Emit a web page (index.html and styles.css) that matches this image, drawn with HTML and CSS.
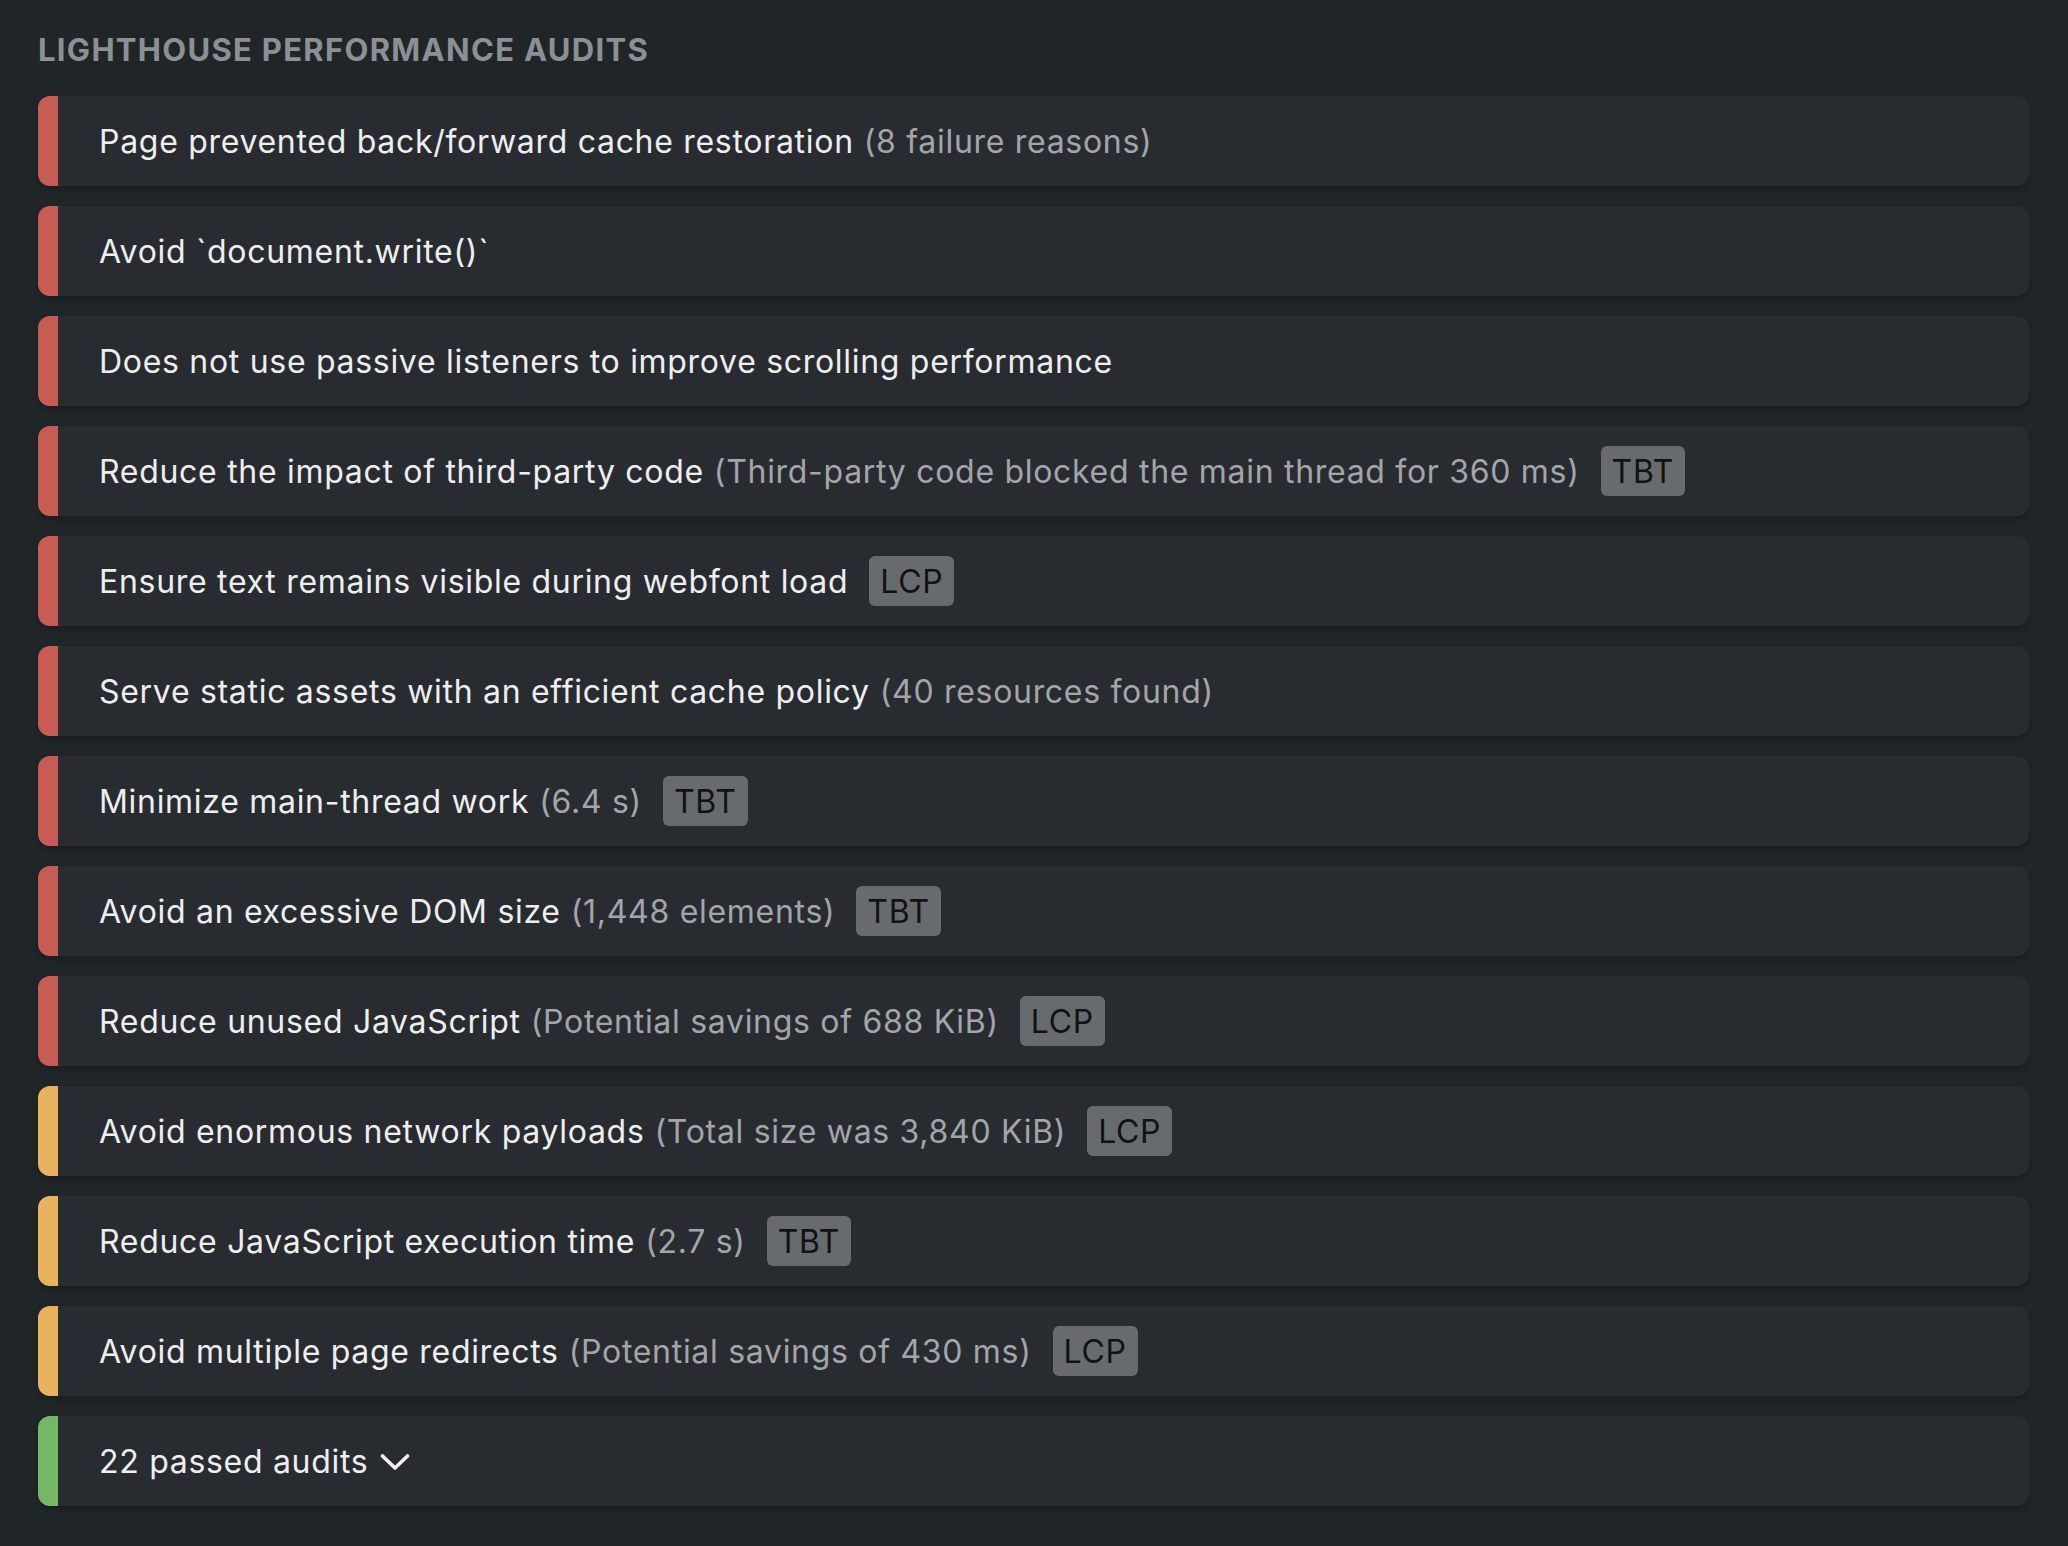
FILE: index.html
```html
<!DOCTYPE html>
<html lang="en">
<head>
<meta charset="utf-8">
<title>Lighthouse Performance Audits</title>
<link rel="stylesheet" href="styles.css">
</head>
<body>
<section class="audits">
  <h2 class="audits-title">LIGHTHOUSE PERFORMANCE AUDITS</h2>
  <ul class="audit-list">
    <li class="audit audit-fail"><span class="audit-bar"></span><div class="audit-body"><span class="audit-name">Page prevented back/forward cache restoration</span><span class="audit-detail">(8 failure reasons)</span></div></li>
    <li class="audit audit-fail"><span class="audit-bar"></span><div class="audit-body"><span class="audit-name">Avoid `document.write()`</span></div></li>
    <li class="audit audit-fail"><span class="audit-bar"></span><div class="audit-body"><span class="audit-name">Does not use passive listeners to improve scrolling performance</span></div></li>
    <li class="audit audit-fail"><span class="audit-bar"></span><div class="audit-body"><span class="audit-name">Reduce the impact of third-party code</span><span class="audit-detail">(Third-party code blocked the main thread for 360 ms)</span><span class="badge">TBT</span></div></li>
    <li class="audit audit-fail"><span class="audit-bar"></span><div class="audit-body"><span class="audit-name">Ensure text remains visible during webfont load</span><span class="badge">LCP</span></div></li>
    <li class="audit audit-fail"><span class="audit-bar"></span><div class="audit-body"><span class="audit-name">Serve static assets with an efficient cache policy</span><span class="audit-detail">(40 resources found)</span></div></li>
    <li class="audit audit-fail"><span class="audit-bar"></span><div class="audit-body"><span class="audit-name">Minimize main-thread work</span><span class="audit-detail">(6.4 s)</span><span class="badge">TBT</span></div></li>
    <li class="audit audit-fail"><span class="audit-bar"></span><div class="audit-body"><span class="audit-name">Avoid an excessive DOM size</span><span class="audit-detail">(1,448 elements)</span><span class="badge">TBT</span></div></li>
    <li class="audit audit-fail"><span class="audit-bar"></span><div class="audit-body"><span class="audit-name">Reduce unused JavaScript</span><span class="audit-detail">(Potential savings of 688 KiB)</span><span class="badge">LCP</span></div></li>
    <li class="audit audit-warn"><span class="audit-bar"></span><div class="audit-body"><span class="audit-name">Avoid enormous network payloads</span><span class="audit-detail">(Total size was 3,840 KiB)</span><span class="badge">LCP</span></div></li>
    <li class="audit audit-warn"><span class="audit-bar"></span><div class="audit-body"><span class="audit-name">Reduce JavaScript execution time</span><span class="audit-detail">(2.7 s)</span><span class="badge">TBT</span></div></li>
    <li class="audit audit-warn"><span class="audit-bar"></span><div class="audit-body"><span class="audit-name">Avoid multiple page redirects</span><span class="audit-detail">(Potential savings of 430 ms)</span><span class="badge">LCP</span></div></li>
    <li class="audit audit-pass"><span class="audit-bar"></span><div class="audit-body"><span class="audit-name">22 passed audits</span><svg class="chevron" width="30" height="18" viewBox="0 0 30 18" aria-hidden="true"><polyline points="2.5,3 15,15 27.5,3" fill="none" stroke="#f0f0f0" stroke-width="3.6" stroke-linecap="round" stroke-linejoin="round"/></svg></div></li>
  </ul>
</section>
</body>
</html>
```
FILE: styles.css
```css
html, body {
  margin: 0;
  padding: 0;
  background: #202528;
}
body {
  font-family: Inter, "Open Sans", sans-serif;
  color: #ececec;
}
.audits {
  padding: 30px 39px 40px 38px;
}
.audits-title {
  margin: 0 0 26px 0;
  font-size: 31px;
  line-height: 40px;
  font-weight: 700;
  color: #8c9095;
  letter-spacing: 1.3px;
}
.audit-list {
  list-style: none;
  margin: 0;
  padding: 0;
  display: flex;
  flex-direction: column;
  gap: 20px;
}
.audit {
  display: flex;
  align-items: stretch;
  height: 90px;
  background: #282c31;
  border-radius: 12px;
  overflow: hidden;
  box-shadow: 0 3px 5px rgba(0, 0, 0, 0.22);
}
.audit-bar {
  width: 20px;
  flex: none;
}
.audit-fail .audit-bar { background: #c95b55; }
.audit-warn .audit-bar { background: #e8b25f; }
.audit-pass .audit-bar { background: #76b766; }
.audit-body {
  display: flex;
  align-items: center;
  padding-left: 41px;
  font-size: 32px;
  letter-spacing: 0.7px;
  white-space: nowrap;
}
.audit-name {
  color: #eeeeee;
}
.audit-detail {
  color: #a3a5a8;
  margin-left: 10px;
}
.badge {
  display: inline-flex;
  align-items: center;
  height: 50px;
  padding: 0 11px;
  margin-left: 21px;
  border-radius: 6px;
  background: #686b6e;
  color: #111214;
}
.chevron {
  margin-left: 12px;
  margin-top: 2px;
}
```
